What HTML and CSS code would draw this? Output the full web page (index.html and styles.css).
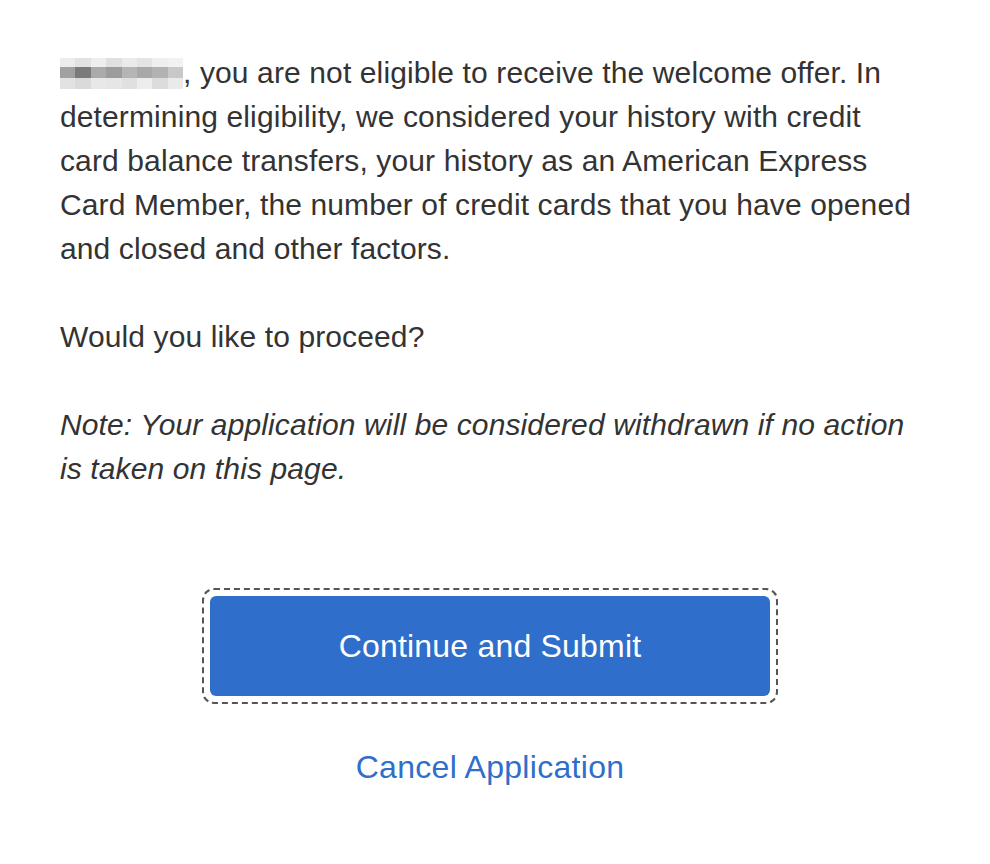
FILE: index.html
```html
<!DOCTYPE html>
<html>
<head>
<meta charset="utf-8">
<link rel="stylesheet" href="styles.css">
</head>
<body>
<main class="page">
  <p class="para"><span class="redacted" aria-label="name"><span class="px p1"></span><span class="px p2"></span><span class="px p3"></span><span class="px p4"></span><span class="px p5"></span><span class="px p6"></span><span class="px p7"></span><span class="px p8"></span></span>, you are not eligible to receive the welcome offer. In determining eligibility, we considered your history with credit card balance transfers, your history as an American Express Card Member, the number of credit cards that you have opened and closed and other factors.</p>
  <p class="para">Would you like to proceed?</p>
  <p class="para note">Note: Your application will be considered withdrawn if no action is taken on this page.</p>
  <div class="actions">
    <div class="focus-ring"><button class="primary">Continue and Submit</button></div>
    <a class="cancel" href="#">Cancel Application</a>
  </div>
</main>
</body>
</html>
```

FILE: styles.css
```css
html, body {
  margin: 0;
  padding: 0;
  background: #ffffff;
}
.page {
  width: 860px;
  padding: 51px 0 0 60px;
  font-family: "Liberation Sans", Arial, Helvetica, sans-serif;
  font-size: 30px;
  letter-spacing: 0.12px;
  line-height: 44px;
  color: #333333;
}
.para {
  margin: 0 0 44px 0;
}
.note {
  font-style: italic;
}
.redacted {
  display: inline-flex;
  vertical-align: -6px;
  width: 123px;
  height: 31px;
  background: #e6e6e6;
}
.px {
  flex: 1;
  height: 100%;
}
.p1 { background: linear-gradient(#ececec 0 30%, #a0a0a0 30% 65%, #e2e2e2 65% 100%); }
.p2 { background: linear-gradient(#e2e2e2 0 30%, #7a7a7a 30% 65%, #dadada 65% 100%); }
.p3 { background: linear-gradient(#eeeeee 0 30%, #aaaaaa 30% 65%, #e8e8e8 65% 100%); }
.p4 { background: linear-gradient(#e0e0e0 0 30%, #9c9c9c 30% 65%, #e6e6e6 65% 100%); }
.p5 { background: linear-gradient(#ebebeb 0 30%, #b5b5b5 30% 65%, #e0e0e0 65% 100%); }
.p6 { background: linear-gradient(#e4e4e4 0 30%, #a8a8a8 30% 65%, #ededed 65% 100%); }
.p7 { background: linear-gradient(#efefef 0 30%, #b2b2b2 30% 65%, #dcdcdc 65% 100%); }
.p8 { background: linear-gradient(#f2f2f2 0 30%, #c8c8c8 30% 65%, #eaeaea 65% 100%); }
.actions {
  display: flex;
  flex-direction: column;
  align-items: center;
  padding-top: 53px;
}
.focus-ring {
  border: 2px dashed #555555;
  border-radius: 12px;
  padding: 6px;
}
.primary {
  display: block;
  width: 560px;
  height: 100px;
  border: none;
  border-radius: 6px;
  background: #2f6fcb;
  color: #ffffff;
  font-family: "Liberation Sans", Arial, Helvetica, sans-serif;
  font-size: 32px;
  letter-spacing: 0.2px;
  cursor: pointer;
}
.cancel {
  margin-top: 43px;
  color: #2f6fcb;
  text-decoration: none;
  font-size: 32px;
  letter-spacing: 0.3px;
  line-height: 40px;
}
```
